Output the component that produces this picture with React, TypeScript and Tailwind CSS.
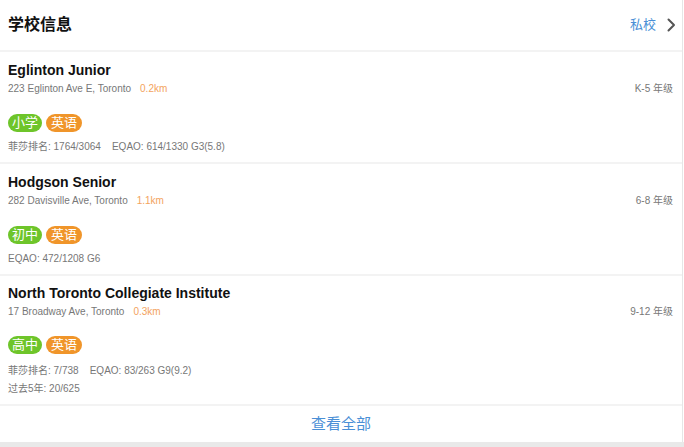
type School = {
  name: string;
  address: string;
  distance: string;
  grade: string;
  level: string;
  stats: string[];
};

const schools: School[] = [
  {
    name: "Eglinton Junior",
    address: "223 Eglinton Ave E, Toronto",
    distance: "0.2km",
    grade: "K-5 年级",
    level: "小学",
    stats: ["菲莎排名: 1764/3064\u00a0\u00a0\u00a0\u00a0EQAO: 614/1330 G3(5.8)"],
  },
  {
    name: "Hodgson Senior",
    address: "282 Davisville Ave, Toronto",
    distance: "1.1km",
    grade: "6-8 年级",
    level: "初中",
    stats: ["EQAO: 472/1208 G6"],
  },
  {
    name: "North Toronto Collegiate Institute",
    address: "17 Broadway Ave, Toronto",
    distance: "0.3km",
    grade: "9-12 年级",
    level: "高中",
    stats: ["菲莎排名: 7/738\u00a0\u00a0\u00a0\u00a0EQAO: 83/263 G9(9.2)", "过去5年: 20/625"],
  },
];

const App = () => {
  return (
    <div
      className="w-[684px] h-[447px] bg-white overflow-hidden"
      style={{ fontFamily: '"Liberation Sans", "Noto Sans CJK SC", sans-serif' }}
    >
      <div className="w-[683px] border-r border-[#e6e6e6] bg-white">
        <div className="h-[50px] flex items-center justify-between pl-[8px] pr-[6px]">
          <span className="text-[16px] font-bold text-[#111]">学校信息</span>
          <div className="flex items-center gap-[11px]">
            <span className="text-[13px] text-[#4a8fd6]">私校</span>
            <svg width="9" height="14" viewBox="0 0 9 14" fill="none">
              <polyline
                points="1.5,1.5 7,7 1.5,12.5"
                stroke="#555"
                strokeWidth="2"
                strokeLinecap="round"
                strokeLinejoin="round"
              />
            </svg>
          </div>
        </div>
        <div className="h-[2px] bg-[#f3f3f3]" />
        {schools.map((school, index) => (
          <div key={school.name}>
            <div className={index === 2 ? "px-[8px] pt-[8px] pb-[6px]" : "px-[8px] pt-[9px] pb-[6px]"}>
              <div className="text-[14px] leading-[18px] font-bold text-[#111]">
                {school.name}
              </div>
              <div className="mt-[3px] flex items-center justify-between text-[10px] leading-[14px]">
                <div>
                  <span className="text-[#777]">{school.address}</span>
                  <span className="ml-[9px] text-[#f3a35e]">{school.distance}</span>
                </div>
                <span className="text-[#777] mr-[1px]">{school.grade}</span>
              </div>
              <div className={index === 2 ? "mt-[17px] flex gap-[4px]" : "mt-[18px] flex gap-[4px]"}>
                <span className="h-[18px] px-[4px] rounded-full bg-[#6ec52a] text-white text-[13px] leading-[18px]">
                  {school.level}
                </span>
                <span className="h-[18px] px-[5px] rounded-full bg-[#f0952a] text-white text-[13px] leading-[18px]">
                  英语
                </span>
              </div>
              <div className={index === 2 ? "mt-[8px]" : "mt-[6px]"}>
                {school.stats.map((line) => (
                  <div key={line} className="text-[10px] leading-[18px] text-[#777]">
                    {line}
                  </div>
                ))}
              </div>
            </div>
            <div className="h-[2px] bg-[#f3f3f3]" />
          </div>
        ))}
        <div className="h-[36px] flex items-center justify-center">
          <span className="text-[15px] text-[#4a8fd6]">查看全部</span>
        </div>
      </div>
      <div className="h-[10px] bg-[#e9e9e9]" />
    </div>
  );
};

export default App;
